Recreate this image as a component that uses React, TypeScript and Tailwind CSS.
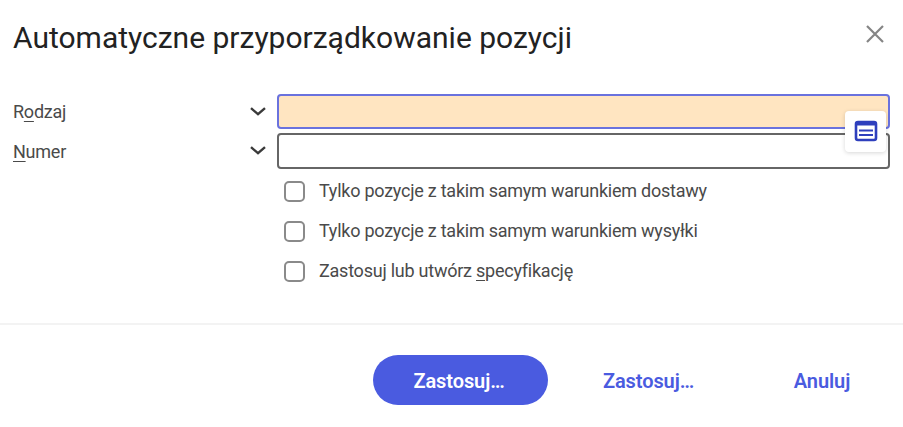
import type { ReactNode } from "react";

function Chevron() {
  return (
    <svg className="h-[10px] w-[18px] shrink-0" viewBox="0 0 18 10" fill="none">
      <path d="M2 1.2l7 6L16 1.2" stroke="#3a3a3a" strokeWidth="2.4" />
    </svg>
  );
}

function FieldLabel({ children }: { children: ReactNode }) {
  return (
    <div className="flex w-[277px] shrink-0 items-center justify-between pl-[13px] pr-[10px]">
      <span>{children}</span>
      <Chevron />
    </div>
  );
}

function Key({ children }: { children: ReactNode }) {
  return (
    <span className="underline decoration-1 underline-offset-[3px]">{children}</span>
  );
}

const OPTIONS: { id: string; label: ReactNode }[] = [
  { id: "delivery", label: "Tylko pozycje z takim samym warunkiem dostawy" },
  { id: "shipping", label: "Tylko pozycje z takim samym warunkiem wysyłki" },
  {
    id: "spec",
    label: (
      <>
        Zastosuj lub utwórz <Key>s</Key>pecyfikację
      </>
    ),
  },
];

export default function App() {
  return (
    <div className="flex h-[427px] w-[903px] flex-col overflow-hidden bg-white font-['Roboto',sans-serif] text-[18px] tracking-[-0.24px] text-[#4a4a4a]">
      <header className="flex h-[94px] items-start justify-between pl-[13px] pr-[18px]">
        <h1 className="pt-[20px] text-[30px] leading-9 tracking-normal text-[#222]">
          Automatyczne przyporządkowanie pozycji
        </h1>
        <button aria-label="Zamknij" className="mt-[24px]">
          <svg className="h-5 w-5" viewBox="0 0 20 20" fill="none">
            <path d="M2 2l16 16M18 2L2 18" stroke="#858585" strokeWidth="2.2" />
          </svg>
        </button>
      </header>

      <main className="flex h-[229px] shrink-0 flex-col">
        <div className="flex h-[35px]">
          <FieldLabel>
            R<Key>o</Key>dzaj
          </FieldLabel>
          <div className="relative h-[35px] w-[613px] rounded-[4px] border-2 border-[#6a72de] bg-[#ffe5c1]">
            <div className="absolute right-[2px] top-[15px] z-10 flex h-[41px] w-[41px] items-center justify-center rounded-[4px] bg-white shadow-[0_1px_4px_rgba(0,0,0,0.16)]">
              <svg className="-mt-[2px] h-[22px] w-[24px]" viewBox="0 0 24 22" fill="none">
                <rect x="2" y="2" width="20" height="18" rx="2" stroke="#2e3fbd" strokeWidth="2.6" />
                <path d="M1 3h22v2.5H1z" fill="#2e3fbd" />
                <path d="M5 10.5h14M5 15h14" stroke="#2e3fbd" strokeWidth="2.2" />
              </svg>
            </div>
          </div>
        </div>
        <div className="mt-[4px] flex h-[36px]">
          <FieldLabel>
            <Key>N</Key>umer
          </FieldLabel>
          <div className="h-[36px] w-[613px] rounded-[4px] border-2 border-[#666] bg-white" />
        </div>
        <div className="flex flex-col pl-[284px] pt-[2px]">
          {OPTIONS.map(({ id, label }) => (
            <label key={id} className="flex h-10 items-center gap-[14px]">
              <input
                type="checkbox"
                className="h-[21px] w-[21px] appearance-none rounded-[5px] border-2 border-[#8a8a8a] bg-white"
              />
              <span className="pb-px">{label}</span>
            </label>
          ))}
        </div>
      </main>

      <footer className="flex h-[104px] shrink-0 gap-[15px] border-t-2 border-[#f3f3f3] pl-[373px] pt-[30px] text-[20px] font-semibold tracking-[-0.1px] text-[#4a5be0]">
        <button className="h-[50px] w-[175px] rounded-full bg-[#4a5be0] pr-[3px] pt-[2px] text-white">
          Zastosuj…
        </button>
        <button className="h-[50px] w-[171px] pt-[2px]">Zastosuj…</button>
        <button className="h-[50px] w-[146px] pt-[2px]">Anuluj</button>
      </footer>
    </div>
  );
}
